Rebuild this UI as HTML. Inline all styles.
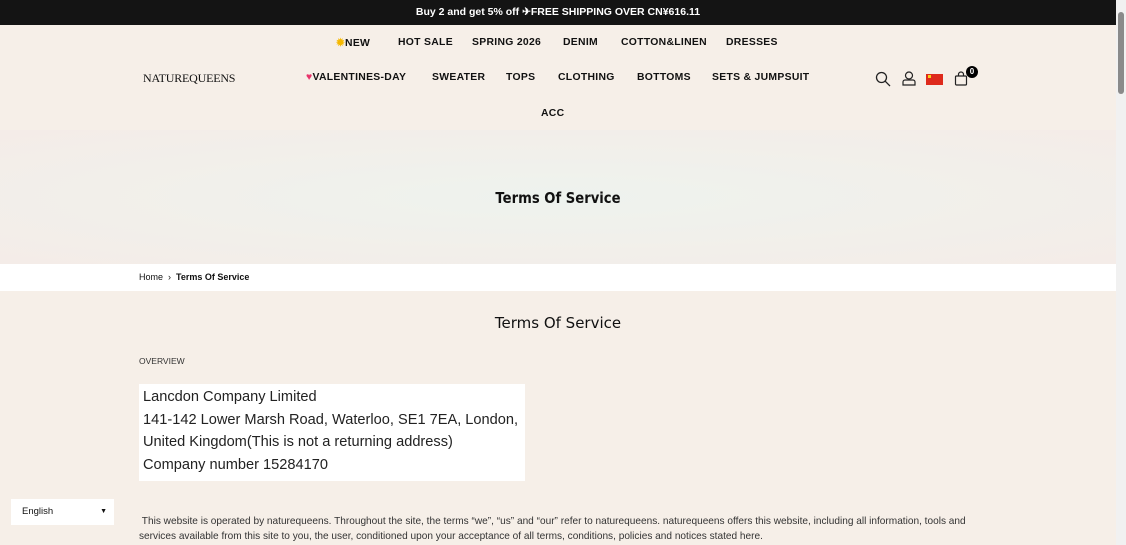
<!DOCTYPE html>
<html><head><meta charset="utf-8"><style>
*{margin:0;padding:0;box-sizing:border-box}
body{width:1126px;height:545px;overflow:hidden;background:#f6efe8;font-family:"Liberation Sans",sans-serif;position:relative;color:#111}
.top{position:absolute;left:0;top:0;width:1116px;height:25px;background:#141414;color:#fff;font-size:10.5px;font-weight:bold;text-align:center;line-height:25px}
.nav a{position:absolute;font-size:10.4px;font-weight:bold;color:#111;letter-spacing:.3px;white-space:nowrap}
.logo{position:absolute;left:143px;top:71px;font-family:"Liberation Serif",serif;font-size:12px;letter-spacing:-.2px}
.banner{position:absolute;left:0;top:130px;width:1116px;height:134px;background:radial-gradient(ellipse at 50% 50%,#eef3ee 0%,#f2efea 60%,#f4ece8 100%)}
.banner h1{position:absolute;width:100%;top:59px;text-align:center;font-size:15.5px;font-family:"DejaVu Sans",sans-serif;font-weight:bold;transform:scaleX(.85)}
.crumb{position:absolute;left:0;top:264px;width:1116px;height:27px;background:#fff;font-size:9px;line-height:27px;padding-left:139px}
h2{position:absolute;top:314px;width:1116px;text-align:center;font-family:"DejaVu Sans",sans-serif;font-weight:normal;font-size:15px}
.ov{position:absolute;left:139px;top:356px;font-size:8.5px;color:#333}
.box{position:absolute;left:139px;top:384px;width:386px;height:97px;background:#fff;padding:2px 4px;font-family:"Liberation Sans",sans-serif;font-size:14.6px;line-height:22.7px;color:#222;white-space:nowrap}
.p{position:absolute;left:139px;top:515px;width:860px;font-size:10.1px;line-height:14.5px;color:#333}
.lang{position:absolute;left:11px;top:499px;width:103px;height:26px;background:#fff;font-size:9.5px;line-height:26px;padding-left:11px}
.scroll{position:absolute;right:0;top:0;width:10px;height:545px;background:#f1f1f1}
</style></head><body>
<div class="top">Buy 2 and get 5% off ✈FREE SHIPPING OVER CN¥616.11</div>
<div class="logo">NATUREQUEENS</div>
<div class="nav">
<a style="left:336px;top:37px"><span style="color:#f5b800">✹</span>NEW</a>
<a style="left:398px;top:37px">HOT SALE</a>
<a style="left:472px;top:37px">SPRING 2026</a>
<a style="left:563px;top:37px">DENIM</a>
<a style="left:621px;top:37px">COTTON&amp;LINEN</a>
<a style="left:726px;top:37px">DRESSES</a>
<a style="left:306px;top:72px"><span style="color:#e8336b">♥</span>VALENTINES-DAY</a>
<a style="left:432px;top:72px">SWEATER</a>
<a style="left:506px;top:72px">TOPS</a>
<a style="left:558px;top:72px">CLOTHING</a>
<a style="left:637px;top:72px">BOTTOMS</a>
<a style="left:712px;top:72px">SETS &amp; JUMPSUIT</a>
<a style="left:541px;top:108px">ACC</a>
</div>
<svg style="position:absolute;left:875px;top:71px" width="16" height="16" fill="none" stroke="#222" stroke-width="1.3"><circle cx="6.5" cy="6.5" r="5"/><path d="M10.2 10.2L15 15"/></svg>
<svg style="position:absolute;left:902px;top:71px" width="14" height="15" fill="none" stroke="#222" stroke-width="1.2"><circle cx="7" cy="4.5" r="3.5"/><path d="M1 14V11a2 2 0 0 1 2-2h8a2 2 0 0 1 2 2v3z"/></svg>
<div style="position:absolute;left:926px;top:74px;width:17px;height:11px;background:#de2a1c"><span style="position:absolute;left:2px;top:1px;width:3px;height:3px;background:#f7d21b"></span></div>
<svg style="position:absolute;left:954px;top:71px" width="14" height="15" fill="none" stroke="#222" stroke-width="1.2"><rect x="1.5" y="5" width="11" height="9" rx="1"/><path d="M4.5 5V3.5a2.5 2.5 0 0 1 5 0V5"/></svg>
<div style="position:absolute;left:966px;top:66px;width:12px;height:12px;border-radius:50%;background:#000;color:#fff;font-size:8px;font-weight:bold;text-align:center;line-height:12px">0</div>
<div class="banner"><h1>Terms Of Service</h1></div>
<div class="crumb">Home &nbsp;› &nbsp;<b>Terms Of Service</b></div>
<h2>Terms Of Service</h2>
<div class="ov">OVERVIEW</div>
<div class="box">Lancdon Company Limited<br>141-142 Lower Marsh Road, Waterloo, SE1 7EA, London,<br>United Kingdom(This is not a returning address)<br>Company number 15284170</div>
<div class="p">&nbsp;This website is operated by naturequeens. Throughout the site, the terms “we”, “us” and “our” refer to naturequeens. naturequeens offers this website, including all information, tools and<br>services available from this site to you, the user, conditioned upon your acceptance of all terms, conditions, policies and notices stated here.</div>
<div class="lang">English<span style="position:absolute;right:7px;font-size:7px">▼</span></div>
<div class="scroll"><div style="position:absolute;left:2px;top:12px;width:6px;height:82px;background:#8a8a8a;border-radius:3px"></div></div>
</body></html>
